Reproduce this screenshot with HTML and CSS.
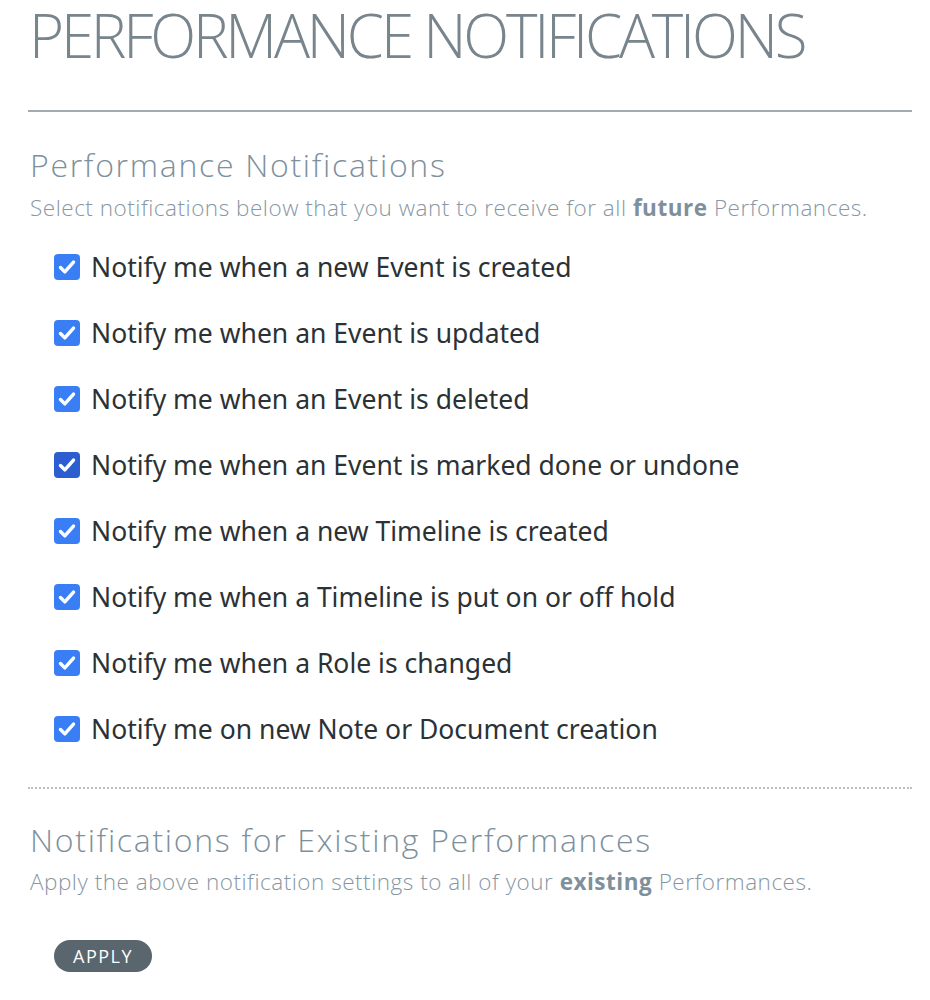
FILE: index.html
```html
<!DOCTYPE html>
<html>
<head>
<title>Performance Notifications</title>
<link rel="stylesheet" href="styles.css">
</head>
<body>
<div class="page">
  <h1 class="title">PERFORMANCE NOTIFICATIONS</h1>

  <div class="section">
    <h2 class="section-title">Performance Notifications</h2>
    <p class="lead">Select notifications below that you want to receive for all <b>future</b> Performances.</p>
    <ul class="checks">
      <li><span class="box"><svg viewBox="0 0 24 24"><path d="M6 12.5l4 4 8-9"/></svg></span>Notify me when a new Event is created</li>
      <li><span class="box"><svg viewBox="0 0 24 24"><path d="M6 12.5l4 4 8-9"/></svg></span>Notify me when an Event is updated</li>
      <li><span class="box"><svg viewBox="0 0 24 24"><path d="M6 12.5l4 4 8-9"/></svg></span>Notify me when an Event is deleted</li>
      <li><span class="box focus"><svg viewBox="0 0 24 24"><path d="M6 12.5l4 4 8-9"/></svg></span>Notify me when an Event is marked done or undone</li>
      <li><span class="box"><svg viewBox="0 0 24 24"><path d="M6 12.5l4 4 8-9"/></svg></span>Notify me when a new Timeline is created</li>
      <li><span class="box"><svg viewBox="0 0 24 24"><path d="M6 12.5l4 4 8-9"/></svg></span>Notify me when a Timeline is put on or off hold</li>
      <li><span class="box"><svg viewBox="0 0 24 24"><path d="M6 12.5l4 4 8-9"/></svg></span>Notify me when a Role is changed</li>
      <li><span class="box"><svg viewBox="0 0 24 24"><path d="M6 12.5l4 4 8-9"/></svg></span>Notify me on new Note or Document creation</li>
    </ul>
  </div>

  <div class="section existing">
    <h2 class="section-title">Notifications for Existing Performances</h2>
    <p class="lead">Apply the above notification settings to all of your <b>existing</b> Performances.</p>
    <button class="apply">APPLY</button>
  </div>
</div>
</body>
</html>
```

FILE: styles.css
```css
body {
  margin: 0;
  background: #fff;
}
.page {
  padding: 0 18px 0 28px;
}
.title {
  margin: 0;
  padding: 0 0 0 1px;
  font-family: "Open Sans", sans-serif;
  font-weight: 300;
  font-size: 60px;
  line-height: 70px;
  letter-spacing: -3.2px;
  color: #78858d;
  box-sizing: border-box;
  height: 112px;
  border-bottom: 2px solid #a2abb2;
}
.section {
  padding-top: 33px;
}
.section-title {
  margin: 0;
  padding-left: 2px;
  font-family: "Open Sans", sans-serif;
  font-weight: 300;
  font-size: 32px;
  line-height: 40px;
  letter-spacing: 1.7px;
  color: #7d909c;
}
.lead {
  margin: 8px 0 0 0;
  padding-left: 2px;
  font-family: "Open Sans", sans-serif;
  font-weight: 300;
  font-size: 22.5px;
  line-height: 30px;
  letter-spacing: 0.52px;
  color: #8797a3;
}
.lead b {
  font-weight: 700;
  color: #7d909c;
}
.checks {
  list-style: none;
  margin: 11px 0 0 0;
  padding: 0 0 25px 26px;
  border-bottom: 2px dotted #b9c0c5;
}
.checks li {
  display: flex;
  align-items: center;
  gap: 11px;
  height: 66px;
  font-family: "Noto Sans", sans-serif;
  font-size: 26.5px;
  color: #2b3236;
}
.box {
  width: 26px;
  height: 26px;
  border-radius: 4px;
  background: #3a7ef6;
  display: flex;
  flex: none;
}
.box.focus {
  background: #2c5ed0;
}
.box svg {
  width: 26px;
  height: 26px;
  fill: none;
  stroke: #fff;
  stroke-width: 3.2;
  stroke-linecap: round;
  stroke-linejoin: round;
}
.existing {
  padding-top: 31px;
}
.existing .lead {
  margin-top: 7px;
}
.apply {
  display: block;
  margin: 43px 0 0 26px;
  height: 32px;
  padding: 0 19px;
  border: 0;
  border-radius: 16px;
  background: #59666d;
  color: #fff;
  font-family: "Open Sans", sans-serif;
  font-size: 18px;
  letter-spacing: 1.5px;
  cursor: pointer;
}
```
